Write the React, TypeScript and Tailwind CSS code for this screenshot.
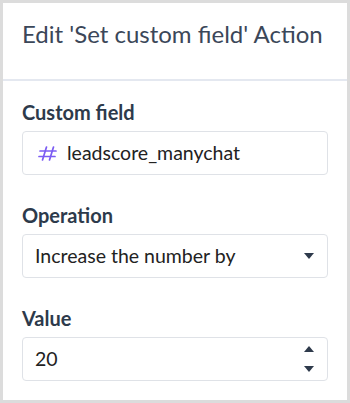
import React from "react";

function Caret({ up = false }: { up?: boolean }) {
  return (
    <svg width="10" height="6" viewBox="0 0 10 6">
      <path d={up ? "M0 6 L5 0 L10 6 Z" : "M0 0 L10 0 L5 6 Z"} fill="#2e3a4b" />
    </svg>
  );
}

function Hash() {
  return (
    <svg width="19" height="15" viewBox="0 0 19 15" fill="none" stroke="#7b5cf3" strokeWidth="1.7" strokeLinecap="round">
      <path d="M8.5 1 L4.5 14" />
      <path d="M15.5 1 L11.5 14" />
      <path d="M2 5 L18 5" />
      <path d="M1 10.5 L17 10.5" />
    </svg>
  );
}

export default function App() {
  return (
    <div
      className="w-[350px] h-[403px] bg-[#dcdcdc] p-[3px]"
      style={{ fontFamily: "Lato, 'Open Sans', sans-serif" }}
    >
      <div className="w-full h-full bg-white flex flex-col">
        <div className="h-[78px] pt-[19px] px-[19px] border-b-2 border-[#e4e8f0]">
          <h1 className="text-[24px] text-[#3b4759] leading-none whitespace-nowrap">Edit 'Set custom field' Action</h1>
        </div>
        <div className="px-[19px] pt-[19px] flex flex-col">
          <label className="text-[20px] font-bold text-[#2d3a4b] leading-6">Custom field</label>
          <div className="mt-[7px] h-[44px] rounded-[4px] border border-[#dfe2e7] flex items-center pl-[15px]">
            <Hash />
            <span className="ml-[10px] text-[19.5px] text-[#222]">leadscore_manychat</span>
          </div>

          <label className="mt-[28px] text-[20px] font-bold text-[#2d3a4b] leading-6">Operation</label>
          <div className="mt-[7px] h-[44px] rounded-[4px] border border-[#dfe2e7] flex items-center justify-between pl-[12px] pr-[13px]">
            <span className="text-[19.5px] text-[#222]">Increase the number by</span>
            <Caret />
          </div>

          <label className="mt-[28px] text-[20px] font-bold text-[#2d3a4b] leading-6">Value</label>
          <div className="mt-[7px] h-[44px] rounded-[4px] border border-[#dfe2e7] flex items-center justify-between pl-[12px] pr-[13px]">
            <span className="text-[19.5px] text-[#222]">20</span>
            <div className="flex flex-col gap-[14px]">
              <Caret up />
              <Caret />
            </div>
          </div>
        </div>
      </div>
    </div>
  );
}
